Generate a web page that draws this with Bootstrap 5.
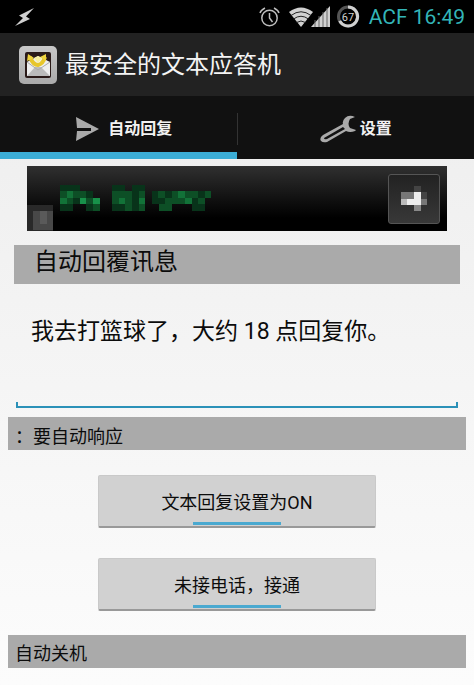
<!DOCTYPE html>
<html lang="zh-CN">
<head>
<meta charset="utf-8">
<meta name="viewport" content="width=device-width, initial-scale=1">
<title>最安全的文本应答机</title>
<link href="https://cdn.jsdelivr.net/npm/bootstrap@5.3.0/dist/css/bootstrap.min.css" rel="stylesheet">
<style>
body{font-family:Roboto,"Noto Sans CJK SC",sans-serif;color:#0c0c0c;background:linear-gradient(#ececec,#fcfcfc);min-height:100vh}
.statusbar{height:33px;background:#000;padding:0 9px 0 14px}
.clock{color:#33b5b8;font-size:21px;line-height:34px}
.appbar{height:63px;background:#222;padding:0 19px}
.app-title{font-size:24px;line-height:32px;color:#f4f4f4}
.tabs{background:#111;height:63px}
.tabs .nav-link{height:63px;padding:9px 0 0;font-size:16px;font-weight:700;color:#f2f2f2;border-radius:0;border-bottom:7px solid transparent}
.tabs .nav-link.active{border-bottom-color:#3badd6;padding-left:10px}
.tab-rule{width:1px;height:32px;background:#333;margin-top:17px}
.promo{height:65px;margin:7px 27px 0;background:linear-gradient(#303030,#111 50%,#000 80%)}
.promo-button{width:52px;height:50px;background:linear-gradient(#222,#383838);border:1px solid #555;border-radius:3px;margin-right:7px}
.section-title{background:#aaa;margin:0 8px;height:33px;line-height:37px;font-size:18px;font-weight:400;padding-left:7px}
.section-title.reply-title{margin:14px 14px 0;height:39px;line-height:34px;font-size:24px;padding-left:20px}
.wide-colon{font-family:"Noto Sans CJK TC",sans-serif}
.message-frame{margin:16px 16px 9px;border-bottom:2px solid #2b91b8;background:linear-gradient(#2b91b8,#2b91b8) left bottom/2px 4px no-repeat,linear-gradient(#2b91b8,#2b91b8) right bottom/2px 4px no-repeat}
.message-box{height:106px;resize:none;background:transparent;border:0;border-radius:0;padding:15px 15px;font-size:23px;line-height:34px;color:#0c0c0c}
.message-box:focus{background:transparent;box-shadow:none}
.toggles{gap:30px;padding:25px 98px 24px}
.toggle{height:53px;background:#d1d1d1;border:1px solid #c9c9c9;border-bottom:2px solid #999;border-radius:2px;padding:8px 0 0;font-size:18px;line-height:34px;color:#0c0c0c}
.toggle-light{display:block;width:88px;height:3px;background:#4aa9d0;margin:2px auto 0}
</style>
</head>
<body>
<header>
<div class="statusbar d-flex align-items-center justify-content-between">
<svg width="22" height="20" viewBox="0 0 22 20" aria-hidden="true"><path d="M20 1 5 8.500 9 11 1 19 16 12 12 9.500Z" fill="#d0d0d0"/></svg>
<div class="d-flex align-items-center">
<svg width="102" height="24" viewBox="260 5 102 24" aria-hidden="true">
<g fill="none" stroke="#bdbdbd" stroke-width="1.500"><circle cx="270.500" cy="18" r="7.700"/><path d="M270.500 13v5l3 4M261 13q1-3 5-5M280 13q-1-3-5-5" /></g>
<path d="M290 12q12-9 24 0L302 27Z" fill="#d0d0d0"/><path d="M292 15.500q10-7.500 20 0M294.500 19q7.500-5.500 15 0M297.500 22.500q4.500-3 9 0" fill="none" stroke="#222" stroke-width="1"/>
<path d="M331 6v21h-19z" fill="#d0d0d0"/><path d="M316 20v7M320 16v11M324 12v15M328 8v19" stroke="#666" stroke-width="1"/>
<circle cx="349" cy="16.500" r="9.500" fill="none" stroke="#555" stroke-width="3"/><path d="M349 7a9.500 9.500 0 1 1-8.500 5.500" fill="none" stroke="#d0d0d0" stroke-width="3" stroke-dasharray="40 99"/>
<text x="349" y="20.500" text-anchor="middle" font-family="Roboto,sans-serif" font-size="11" fill="#d0d0d0">67</text>
</svg>
<span class="clock ms-2">ACF 16:49</span>
</div>
</div>
<div class="appbar d-flex align-items-center">
<svg class="me-2 flex-shrink-0" width="38" height="40" viewBox="0 0 38 40" aria-hidden="true">
<defs><linearGradient id="frame" x2="0" y2="1"><stop stop-color="#c8c8c8"/><stop offset="1" stop-color="#aaa"/></linearGradient></defs>
<rect y="1" width="38" height="38" rx="5" fill="url(#frame)"/><rect x="6" y="7" width="26" height="26" rx="2" fill="#2a1a18"/>
<path d="M8 17 19 11 31 17V31H8Z" fill="#eee"/><path d="m8 31 8-9h6l9 9Z" fill="#bbb"/><path d="m8 17 11 8 12-8" fill="none" stroke="#aaa"/>
<path d="M11 12q3 8 8 8 5-1 7-8" fill="none" stroke="#e7c62b" stroke-width="4"/><path d="m8 16 1-7 6 4ZM21 12l6-3v7Z" fill="#efd43d"/><path d="m15 13 4-2 4 2-4 5Z" fill="#f7f0a0"/>
</svg>
<h1 class="app-title fw-normal mb-0">最安全的文本应答机</h1>
</div>
<nav class="tabs d-flex">
<a href="#reply" class="nav-link active flex-fill w-50 d-flex align-items-center justify-content-center" aria-current="page">
<svg class="me-2" width="26" height="26" viewBox="0 0 26 26" aria-hidden="true"><path d="M2 1 25 13 2 25 3 15H17V12H3Z" fill="#aaa"/></svg>自动回复</a>
<span class="tab-rule"></span>
<a href="#settings" class="nav-link flex-fill w-50 d-flex align-items-center justify-content-center">
<svg class="me-1" width="36" height="28" viewBox="0 0 36 28" aria-hidden="true"><path fill-rule="evenodd" d="M35 2Q29-1 25 3 22 6 23 9L3 20Q-1 23 1 26 3 28 7 27L26 16Q30 18 35 16L36 15 30 13Q27 9 30 4ZM23 12 25 14 7 24Q4 25 4 23Z" fill="#aaa"/></svg>设置</a>
</nav>
</header>
<main>
<div class="promo d-flex align-items-center justify-content-between">
<svg width="190" height="65" viewBox="0 0 190 65" aria-hidden="true" shape-rendering="crispEdges">
<path d="M0 39h26v26H0z" fill="#292929"/><path d="M6 45h20v19H6z" fill="#484848"/><path d="M13 45h7v13h-7z" fill="#5a5a5a"/>
<path d="M33 19h20v6h13v7h7v13H59v-7H46v7H33zM85 19h13v6h7v-6h13v26H85zM125 25h59v7h-6v13h-13v-7h-20v7h-13v-7h-7z" fill="#08331a"/>
<path d="M33 25h26v7H46v6H33zM53 32h13v6H53zM66 32h7v13h-7zM85 25h20v13H85zM98 38h7v7h-7zM112 25h6v20h-6zM131 25h7v7h-7zM145 25h26v7h-26zM138 32h27v6h-27zM132 38h13v7h-13zM178 25h6v7h-6zM171 32h7v6h-7z" fill="#0d4f26"/>
<path d="M33 32h7v6h-7zM40 25h6v7h-6zM53 32h6v6h-6zM66 32h7v6h-7zM92 32h6v6h-6zM112 32h6v6h-6zM151 25h7v7h-7zM158 32h7v6h-7z" fill="#127238"/>
<path d="M53 32h6v6h-6zM66 32h7v6h-7z" fill="#18914a"/>
</svg>
<button type="button" class="promo-button p-0 d-flex align-items-center justify-content-center" aria-label="+">
<svg width="28" height="26" viewBox="0 0 28 26" shape-rendering="crispEdges" aria-hidden="true"><path d="M14 0h7v6h-7z" fill="#444"/><path d="M1 6h13v7H1zM21 13h6v6h-6z" fill="#777"/><path d="M21 6h6v7h-6z" fill="#444"/><path d="M1 13h6v6H1z" fill="#bbb"/><path d="M7 13h7v6H7zM14 6h7v13h-7z" fill="#eee"/><path d="M14 19h7v6h-7z" fill="#888"/></svg>
</button>
</div>
<h2 class="section-title reply-title" id="reply"><label for="message">自动回覆讯息</label></h2>
<div class="message-frame"><textarea id="message" class="message-box form-control d-block" spellcheck="false">我去打篮球了，大约 18 点回复你。</textarea></div>
<h2 class="section-title mb-0"><span class="wide-colon">：</span>要自动响应</h2>
<div class="toggles d-grid">
<button type="button" class="btn toggle" aria-pressed="true">文本回复设置为ON<span class="toggle-light"></span></button>
<button type="button" class="btn toggle" aria-pressed="true">未接电话，接通<span class="toggle-light"></span></button>
</div>
<h2 class="section-title mb-0" id="settings">自动关机</h2>
</main>
<script src="https://cdn.jsdelivr.net/npm/bootstrap@5.3.0/dist/js/bootstrap.bundle.min.js"></script>
</body>
</html>
